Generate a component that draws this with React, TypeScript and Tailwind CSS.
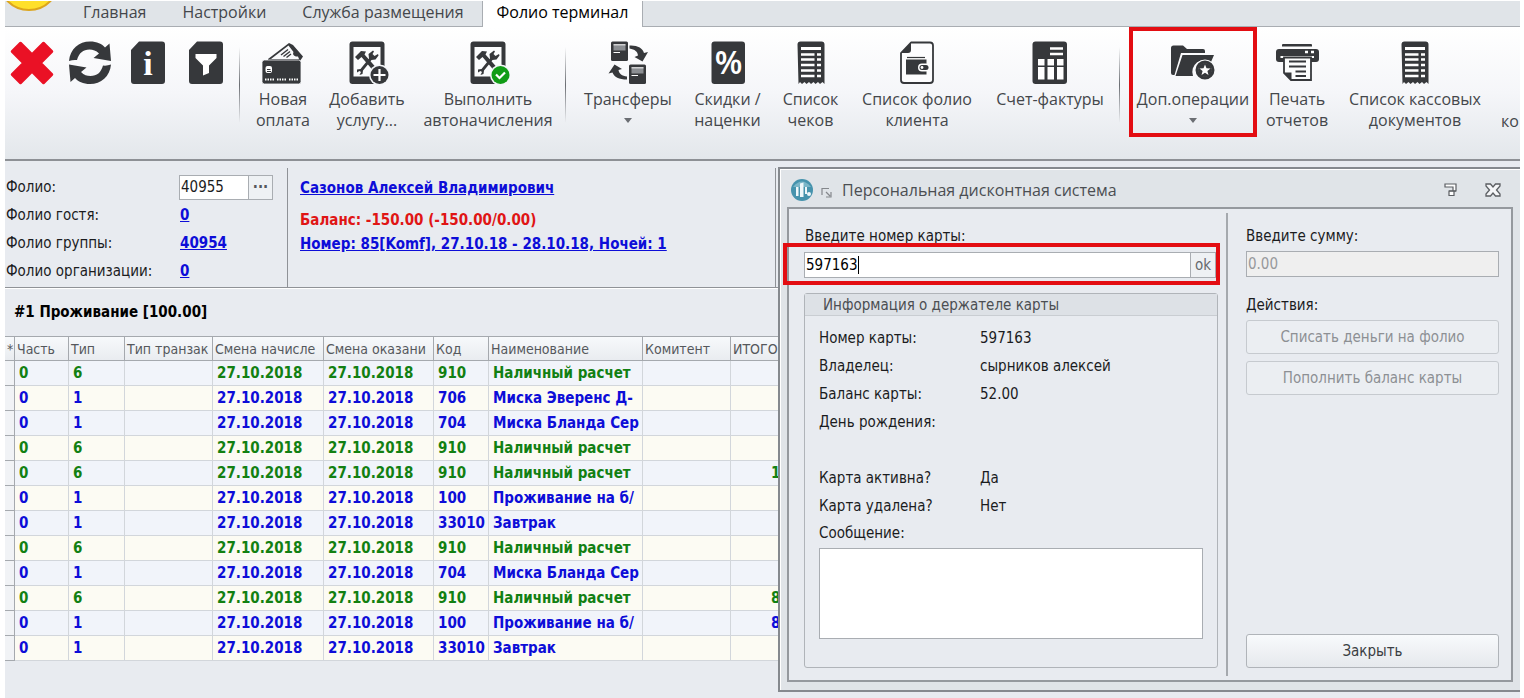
import { useState } from "react";
import type { ReactNode } from "react";

const DARK = "#36383b";

/* ICONS */
function Icon({ children }: { children: ReactNode }) {
  return (
    <svg viewBox="0 0 44 44" className="block size-11 shrink-0" aria-hidden="true">
      {children}
    </svg>
  );
}

function CloseIcon() {
  return (
    <Icon>
      <path
        d="M2 10.5 10.5 2 22 13.5 33.500 2 42 10.500 30.500 22 42 33.500 33.500 42 22 30.500 10.500 42 2 33.500 13.500 22Z"
        fill="#ea1125"
        stroke="#ea1125"
        strokeWidth="2.500"
        strokeLinejoin="round"
      />
    </Icon>
  );
}

function RefreshIcon() {
  const arrow =
    "M1 20C2 8 11 .5 22 .5C29 .5 34 3 37 6.500L41.500 2.500L43 20L25.500 17L31 12.500C28 9.500 25 8.500 21.500 8.500C15 8.500 11 12 9 19Q5 18.500 1 20Z";
  return (
    <Icon>
      <path d={arrow} fill={DARK} />
      <path d={arrow} fill={DARK} transform="rotate(180 22 21.750)" />
    </Icon>
  );
}

function InfoIcon() {
  return (
    <Icon>
      <path d="M13 .5H36a3 3 0 0 1 3 3V40a3 3 0 0 1-3 3H8a3 3 0 0 1-3-3V9Z" fill={DARK} />
      <text x="22" y="34" textAnchor="middle" fontSize="34" fontWeight="700" fill="#fff" fontFamily="Liberation Serif, serif">
        i
      </text>
    </Icon>
  );
}

function FilterIcon() {
  return (
    <Icon>
      <path d="M13 .5H36a3 3 0 0 1 3 3V40a3 3 0 0 1-3 3H8a3 3 0 0 1-3-3V9Z" fill={DARK} />
      <path d="M11.500 13h21v4L25 24.500V32l-6 2.500v-10L11.500 17Z" fill="#fff" />
    </Icon>
  );
}

function PaymentIcon() {
  return (
    <Icon>
      <path d="M7 18 28 2 32 4 42 15.500 39 20V24H7Z" fill={DARK} />
      <path d="M10 18 27.500 4.500 32.500 11C31 14 34 16 37 15.500L38 18Z" fill="#f8f9fb" />
      <path d="M20 14 27 8.500M22.500 15.500 29 10.500M25.500 16.500 30 13" stroke={DARK} strokeWidth="1.400" />
      <rect x="1" y="19" width="39" height="24" rx="2.500" fill={DARK} stroke="#f8f9fb" strokeWidth=".8" />
      <rect x="4.500" y="25" width="6.500" height="7" rx="2" fill="#fff" />
      <path d="M6 28.500h3.500M6 30.500h4" stroke={DARK} strokeWidth="1" />
      <path d="M4 38.500h9M16 38.500h9M28 38.500h9" stroke="#fff" strokeWidth="2" strokeDasharray="1.500 1" />
    </Icon>
  );
}

function TabletIcon({ done = false }: { done?: boolean }) {
  return (
    <Icon>
      <rect x="4.500" y=".5" width="35" height="42.500" rx="3" fill={DARK} />
      <rect x="8.500" y="6" width="27" height="29.500" fill="#fbfcfd" />
      {/* hammer */}
      <path d="M10 16 16 10 21 10.500 19.500 13.500 31 26.500 28 29.500 16.500 16 13 19Z" fill={DARK} />
      {/* wrench */}
      <path
        d="M12 28.500 15.500 28 24 17.500 23.500 13 28 9.500 29 10.500 27.500 13 29.500 15 33 13 33.500 14.500 30.500 18.500 26.500 19 18 29.500 17.500 33 14.500 34 16 31 14.500 30 12 31.500Z"
        fill={DARK}
      />
      <circle cx="34.500" cy="34" r="10.500" fill="#f4f6f9" />
      <circle cx="34.500" cy="34" r="9" fill={done ? "#119c16" : DARK} />
      {done ? (
        <path d="M30 33.500 33.500 37 39 31.500" fill="none" stroke="#fff" strokeWidth="2.200" />
      ) : (
        <path d="M28.500 34h12M34.500 28v12" stroke="#fff" strokeWidth="2.200" />
      )}
    </Icon>
  );
}

function TransferIcon() {
  return (
    <Icon>
      <rect x="5" y=".5" width="17" height="19.500" rx="1.500" fill={DARK} />
      <rect x="7.500" y="3.500" width="12" height="6" fill="#8b8e92" />
      <path d="M7.500 3.800h12M7.500 11.500h6.500" stroke="#fff" strokeWidth="1" />
      <rect x="23" y="23.500" width="17" height="19.500" rx="1.500" fill={DARK} />
      <rect x="25.500" y="26.500" width="12" height="6" fill="#8b8e92" />
      <path d="M25.500 26.800h12M25.500 34.500h6.500" stroke="#fff" strokeWidth="1" />
      <path d="M23.500 4.500C31 4 37 7 38 12L42 11 36.500 20.500 28.500 16 32 14.500C31.500 10.500 29 8.500 23.500 7.500Z" fill={DARK} />
      <path d="M21 38.500C13 38.500 8 36 6.500 31.500L2.500 32.500 8.500 23.500 16 28 12.500 29C13 32.500 16 35 21 35.500Z" fill={DARK} />
    </Icon>
  );
}

function PercentIcon() {
  return (
    <Icon>
      <rect x="5.500" y=".5" width="33.500" height="42.500" rx="3" fill={DARK} />
      <text x="22.500" y="33" textAnchor="middle" fontSize="32" fontWeight="600" fill="#fff" fontFamily="Open Sans, sans-serif">
        %
      </text>
    </Icon>
  );
}

function ReceiptIcon() {
  return (
    <Icon>
      <path
        d="M8.500 3.500a3 3 0 0 1 3-3h21a3 3 0 0 1 3 3V43l-2-2-2.500 2-2-2-2.500 2-2-2-2.500 2-2-2-2.500 2-2-2-2.500 2-2-2-1.500 2Z"
        fill={DARK}
      />
      <path d="M12 7.500H32" stroke="#fff" strokeWidth="3" />
      {[13.500, 18.500, 24, 29.500, 35].map((y) => (
        <path key={y} d={`M12 ${y}H25.500M28 ${y}H32`} stroke="#fff" strokeWidth="2.500" />
      ))}
    </Icon>
  );
}

function FolioIcon() {
  return (
    <Icon>
      <path
        d="M16 1.500H35a3 3 0 0 1 3 3V39a3 3 0 0 1-3 3H9a3 3 0 0 1-3-3V12Z"
        fill="#fdfdfe"
        stroke={DARK}
        strokeWidth="1.800"
        strokeLinejoin="round"
      />
      <path d="M16 1.500V9a3 3 0 0 1-3 3H6Z" fill={DARK} />
      <path d="M12 16.500H30" stroke={DARK} strokeWidth="1.200" />
      <path d="M11 18.500H31.500V33.500H11Z" fill={DARK} />
      <rect x="23" y="22.500" width="12" height="8" rx="4" fill="#fff" />
      <rect x="24.500" y="24" width="9" height="5" rx="2.500" fill={DARK} />
      <circle cx="27" cy="26.500" r="1.400" fill="#fff" />
    </Icon>
  );
}

function InvoiceIcon() {
  return (
    <Icon>
      <rect x="4.500" y=".5" width="34.500" height="42.500" rx="3" fill={DARK} />
      <path d="M22 7.500H35M22 13H35" stroke="#fff" strokeWidth="2.500" />
      {[10, 19.500, 29].map((x) => (
        <g key={x} fill="#fff">
          <rect x={x} y="18" width="6.500" height="6.500" />
          <rect x={x} y="26" width="6.500" height="12.500" />
        </g>
      ))}
    </Icon>
  );
}

function FolderIcon() {
  return (
    <Icon>
      <path d="M0 7a2.500 2.500 0 0 1 2.500-2.500H12L16 8H32a2 2 0 0 1 2 2v2H10L3.500 34H2a2 2 0 0 1-2-2Z" fill={DARK} />
      <path d="M11.500 14H43L40 21A12 12 0 0 0 22 35H4.500Z" fill={DARK} />
      <circle cx="34" cy="29" r="10.500" fill="#f9fafb" />
      <circle cx="34" cy="29" r="8" fill="none" stroke={DARK} strokeWidth="3" />
      <circle cx="34" cy="29" r="7" fill={DARK} />
      <path d="M34 23.500 35.500 27.300 39.500 27.500 36.400 30.100 37.500 34 34 31.800 30.500 34 31.600 30.100 28.500 27.500 32.500 27.300Z" fill="#fff" />
    </Icon>
  );
}

function PrinterIcon() {
  return (
    <Icon>
      <path d="M7 5.500V4a1 1 0 0 1 1-1H36a1 1 0 0 1 1 1V5.500Z" fill={DARK} />
      <path d="M1 11a3 3 0 0 1 3-3H41a3 3 0 0 1 3 3V18a3 3 0 0 1-3 3H4a3 3 0 0 1-3-3Z" fill={DARK} />
      <path d="M30 11h3M36 11h3" stroke="#fff" strokeWidth="2.500" />
      <path d="M5.500 16H39" stroke="#fff" strokeWidth="2" />
      <path d="M9 16.500H36V39H16L9 32Z" fill="#fcfdfd" stroke={DARK} strokeWidth="1.800" />
      <path d="M9 31.500H16.500V39.500Z" fill={DARK} />
      <path d="M14 20.500H31M14 25.500H31M20.500 30.500H31M20.500 35H31" stroke={DARK} strokeWidth="1.900" />
    </Icon>
  );
}

/* DATA */
const tabs = ["Главная", "Настройки", "Служба размещения", "Фолио терминал"];

type Tool = { lines: string[]; icon: ReactNode; width: string; menu?: boolean; marked?: boolean };

const toolGroups: Tool[][] = [
  [
    { lines: ["Новая", "оплата"], icon: <PaymentIcon />, width: "w-[74px]" },
    { lines: ["Добавить", "услугу..."], icon: <TabletIcon />, width: "w-[94px]" },
    { lines: ["Выполнить", "автоначисления"], icon: <TabletIcon done />, width: "w-[148px]" },
  ],
  [
    { lines: ["Трансферы"], icon: <TransferIcon />, width: "w-[112px]", menu: true },
    { lines: ["Скидки /", "наценки"], icon: <PercentIcon />, width: "w-[87px]" },
    { lines: ["Список", "чеков"], icon: <ReceiptIcon />, width: "w-[79px]" },
    { lines: ["Список фолио", "клиента"], icon: <FolioIcon />, width: "w-[134px]" },
    { lines: ["Счет-фактуры"], icon: <InvoiceIcon />, width: "w-[132px]" },
  ],
  [
    { lines: ["Доп.операции"], icon: <FolderIcon />, width: "w-[128px]", menu: true, marked: true },
    { lines: ["Печать", "отчетов"], icon: <PrinterIcon />, width: "w-[80px]" },
    { lines: ["Список кассовых", "документов"], icon: <ReceiptIcon />, width: "w-[156px]" },
  ],
];

const columns = [
  { title: "*", width: "w-[10px]" },
  { title: "Часть", width: "w-[54px]" },
  { title: "Тип", width: "w-[56px]" },
  { title: "Тип транзак", width: "w-[88px]" },
  { title: "Смена начисле", width: "w-[111px]" },
  { title: "Смена оказани", width: "w-[110px]" },
  { title: "Код", width: "w-[55px]" },
  { title: "Наименование", width: "w-[154px]" },
  { title: "Комитент", width: "w-[88px]" },
  { title: "ИТОГО", width: "w-[120px]" },
];

const rows = [
  { type: 6, code: "910", name: "Наличный расчет", total: "" },
  { type: 1, code: "706", name: "Миска Эверенс Д-", total: "" },
  { type: 1, code: "704", name: "Миска Бланда Сер", total: "" },
  { type: 6, code: "910", name: "Наличный расчет", total: "" },
  { type: 6, code: "910", name: "Наличный расчет", total: "1" },
  { type: 1, code: "100", name: "Проживание на б/", total: "" },
  { type: 1, code: "33010", name: "Завтрак", total: "" },
  { type: 6, code: "910", name: "Наличный расчет", total: "" },
  { type: 1, code: "704", name: "Миска Бланда Сер", total: "" },
  { type: 6, code: "910", name: "Наличный расчет", total: "8" },
  { type: 1, code: "100", name: "Проживание на б/", total: "8" },
  { type: 1, code: "33010", name: "Завтрак", total: "" },
];

const cardInfo = [
  ["Номер карты:", "597163"],
  ["Владелец:", "сырников алексей"],
  ["Баланс карты:", "52.00"],
  ["День рождения:", ""],
  ["", ""],
  ["Карта активна?", "Да"],
  ["Карта удалена?", "Нет"],
];

function Divider() {
  return (
    <div className="mt-5 mr-[6px] ml-[3px] h-[76px] w-px shrink-0 bg-linear-to-b from-transparent via-[#6a6d72] to-transparent" />
  );
}

function ToolButton({ tool }: { tool: Tool }) {
  return (
    <button
      className={`flex h-[110px] shrink-0 flex-col items-center whitespace-nowrap text-[16px] leading-[21px] ${tool.width} ${
        tool.marked ? "ml-[3px] border-4 border-[#e30d12] pt-[10px]" : "pt-[14px]"
      }`}
    >
      {tool.icon}
      <span className="mt-1">{tool.lines[0]}</span>
      {tool.lines[1] && <span>{tool.lines[1]}</span>}
      {tool.menu && (
        <svg viewBox="0 0 8 5" className="mt-2 h-[5px] w-2" aria-hidden="true">
          <path d="M0 0H8L4 5Z" fill="#6b6e73" />
        </svg>
      )}
    </button>
  );
}

function Ribbon() {
  return (
    <header className="text-[#44474b] [font-family:'Open_Sans','Noto_Sans',sans-serif]">
      {/* TABS */}
      <nav className="relative flex h-[26px] overflow-hidden bg-[#e0e4e8] pl-[60px] text-[16px] leading-[22px] shadow-[inset_0_-1px_0_#a9adb2]">
        <div className="absolute bottom-4 -left-[7px] size-[62px] rounded-full border-2 border-[#dca51c] bg-[#ffe02b]" />
        {tabs.map((tab) => (
          <button
            key={tab}
            className={
              tab === "Фолио терминал"
                ? "border-x border-[#a9adb2] bg-white px-[14px] pb-1 text-black"
                : "px-[18px] pb-1"
            }
          >
            {tab}
          </button>
        ))}
      </nav>

      {/* TOOLS */}
      <div className="flex h-[134px] items-start overflow-hidden border-b-2 border-[#8d9095] bg-linear-to-b from-white via-[#f5f6f9] to-[#e3e7eb] pl-[5px]">
        <div className="mr-2 flex shrink-0 gap-[14px] pt-[14px]">
          {[
            { label: "Закрыть", icon: <CloseIcon /> },
            { label: "Обновить", icon: <RefreshIcon /> },
            { label: "Информация", icon: <InfoIcon /> },
            { label: "Фильтр", icon: <FilterIcon /> },
          ].map((item) => (
            <button key={item.label} aria-label={item.label}>
              {item.icon}
            </button>
          ))}
        </div>
        {toolGroups.map((group, i) => (
          <div key={i} className="flex shrink-0">
            <Divider />
            {group.map((tool) => (
              <ToolButton key={tool.lines.join(" ")} tool={tool} />
            ))}
          </div>
        ))}
        <button className="pt-[84px] pl-2 text-[16px] leading-[21px]">ко</button>
      </div>
    </header>
  );
}

function FolioInfo() {
  const [folio, setFolio] = useState("40955");
  const link = "font-bold text-[#0d0dd8] underline";

  return (
    <section className="flex h-[127px] border-b border-[#8f9297] pt-[7px] shadow-[0_1px_0_#fff]">
      <div className="grid w-[283px] grid-cols-[174px_1fr] auto-rows-[28px] items-center border-r border-[#8f9297] pt-[5px] pl-px">
        <label htmlFor="folio">Фолио:</label>
        <div className="-ml-px flex h-[25px] w-[94px] border border-[#a9adb2] bg-white">
          <input
            id="folio"
            value={folio}
            onChange={(e) => setFolio(e.target.value)}
            className="w-[68px] px-px outline-none"
          />
          <button className="flex flex-1 items-center justify-center border-l border-[#a9adb2] bg-[#eef1f4] font-bold leading-none text-[#55585c]">
            ···
          </button>
        </div>
        <span>Фолио гостя:</span>
        <a href="#guest" className={link}>0</a>
        <span>Фолио группы:</span>
        <a href="#group" className={link}>40954</a>
        <span>Фолио организации:</span>
        <a href="#company" className={link}>0</a>
      </div>
      <div className="flex w-[488px] flex-col items-start border-r border-[#8f9297] pt-[10px] pl-3 font-bold leading-5">
        <a href="#person" className={link}>Сазонов Алексей Владимирович</a>
        <p className="mt-3 text-[#e01515]">Баланс: -150.00 (-150.00/0.00)</p>
        <a href="#room" className={`mt-1 ${link}`}>Номер: 85[Komf], 27.10.18 - 28.10.18, Ночей: 1</a>
      </div>
    </section>
  );
}

function FolioTable() {
  const cell = "overflow-hidden border-r border-b border-[#d2d6db] px-1 whitespace-nowrap";

  return (
    <section>
      <h2 className="flex h-12 items-center pl-[9px] font-bold text-black">#1 Проживание [100.00]</h2>
      <table className="w-[846px] table-fixed border-separate border-spacing-0">
        <thead>
          <tr className="h-[25px] text-left text-[14px] text-[#55585c]">
            {columns.map((col) => (
              <th
                key={col.title}
                className={`overflow-hidden border-t border-r border-b border-[#a5a9ae] bg-linear-to-b from-[#f7f9fb] to-[#e9ecf0] pl-[2px] font-normal whitespace-nowrap ${col.width}`}
              >
                {col.title}
              </th>
            ))}
          </tr>
        </thead>
        <tbody>
          {rows.map((row, i) => (
            <tr
              key={i}
              className={`h-[25px] font-bold ${i % 2 ? "bg-[#fcfbf3]" : "bg-[#f1f4fa]"} ${
                row.type === 6 ? "text-[#128012]" : "text-[#0d0dd8]"
              }`}
            >
              <td className="border-r border-b border-[#a5a9ae] bg-[#f1f3f6]" />
              <td className={cell}>0</td>
              <td className={cell}>{row.type}</td>
              <td className={cell} />
              <td className={cell}>27.10.2018</td>
              <td className={cell}>27.10.2018</td>
              <td className={cell}>{row.code}</td>
              <td className={cell}>{row.name}</td>
              <td className={cell} />
              <td className={`${cell} pl-10`}>{row.total}</td>
            </tr>
          ))}
        </tbody>
      </table>
    </section>
  );
}

function CardDialog() {
  const [card, setCard] = useState("597163");
  const [message, setMessage] = useState("");
  const action = "h-[34px] w-full rounded-[3px] border";

  return (
    <div
      role="dialog"
      aria-labelledby="dialog-title"
      className="absolute top-[6px] -right-px flex h-[525px] w-[743px] flex-col border-2 border-r-0 border-[#85898e] bg-[#e0e4e8] pr-2 pb-2 pl-[7px] shadow-[inset_1px_1px_0_#fff]"
    >
      {/* TITLE */}
      <div className="flex h-[38px] items-center pt-1 pl-1 text-[#4b4e52] [font-family:'Open_Sans','Noto_Sans',sans-serif]">
        <svg viewBox="0 0 22 22" className="size-[22px]" aria-hidden="true">
          <circle cx="11" cy="11" r="11" fill="#4693ad" />
          <path d="M2 8Q11 -3 20 8" fill="#7bb6c8" />
          <path d="M5 8h2.500v9H5ZM9 4.500l3.500-1V18H9ZM14 8h2v7h-2Z" fill="#eef7fa" />
          <circle cx="18" cy="15" r="2" fill="#eef7fa" />
        </svg>
        <svg viewBox="0 0 11 11" className="mt-1 ml-2 size-[11px]" aria-hidden="true">
          <path d="M1 8V1.500H8M10 5v5H5M5 5l4 4" fill="none" stroke="#84878b" strokeWidth="1.200" />
        </svg>
        <h2 id="dialog-title" className="ml-[10px] text-[16px]">Персональная дисконтная система</h2>
        <button aria-label="Свернуть" className="ml-auto">
          <svg viewBox="0 0 14 14" className="size-[14px]" aria-hidden="true">
            <path d="M1 1H12V8H10V12.500H5V8H9V4H1Z" fill="#fff" stroke="#5b5e62" strokeWidth="1.200" />
            <path d="M5 8H12" stroke="#5b5e62" strokeWidth="1.200" />
          </svg>
        </button>
        <button aria-label="Закрыть окно" className="mr-3 ml-[27px]">
          <svg viewBox="0 0 16 14" className="h-[14px] w-4" aria-hidden="true">
            <path
              d="M1 1H5.500L8 4 10.500 1H15V3L11.500 7 15 11V13H10.500L8 10 5.500 13H1V11L4.500 7 1 3Z"
              fill="#f5f6f8"
              stroke="#5b5e62"
              strokeWidth="1.300"
            />
          </svg>
        </button>
      </div>

      <div className="flex flex-1 border-2 border-[#95999e] bg-[#e8ebf0]">
        {/* CARD */}
        <div className="flex flex-1 flex-col pt-[17px] pr-2 pb-3 pl-[15px]">
          <label htmlFor="card" className="pl-px leading-5">Введите номер карты:</label>
          <div className="relative mt-[6px] mr-[2px] flex h-[26px] border border-[#a9adb2] bg-white">
            <input
              id="card"
              value={card}
              onChange={(e) => setCard(e.target.value)}
              className="min-w-0 flex-1 px-px text-black outline-none"
            />
            <span className="absolute top-[3px] left-[53px] h-[18px] w-px bg-black" />
            <button className="w-[25px] border-l border-[#a9adb2] bg-[#eef1f4] text-[#66696d]">ok</button>
            <div className="pointer-events-none absolute -top-[10px] -right-[5px] -bottom-[8px] -left-[22px] border-4 border-[#e30d12]" />
          </div>

          <fieldset className="mt-[15px] flex flex-1 flex-col rounded-[3px] border border-[#b0b4b9]">
            <p className="h-[22px] border-b border-[#c9cdd2] bg-[#dde1e6] pl-[18px] leading-[22px] text-[#4b4e52]">
              Информация о держателе карты
            </p>
            <dl className="mt-2 grid auto-rows-[28px] grid-cols-[161px_1fr] items-center pl-[14px]">
              {cardInfo.map(([name, value], i) => (
                <div key={i} className="contents">
                  <dt>{name}</dt>
                  <dd>{value}</dd>
                </div>
              ))}
            </dl>
            <label htmlFor="message" className="pl-[14px] leading-[26px]">Сообщение:</label>
            <textarea
              id="message"
              value={message}
              onChange={(e) => setMessage(e.target.value)}
              className="mx-[14px] mt-[2px] h-[91px] resize-none border border-[#a9adb2] bg-white p-1 outline-none"
            />
          </fieldset>
        </div>

        {/* ACTIONS */}
        <div className="my-1 flex w-[285px] flex-col border-l-2 border-[#a5a9ae] pt-[13px] pr-3 pb-2 pl-[18px]">
          <label htmlFor="sum" className="leading-5">Введите сумму:</label>
          <input
            id="sum"
            disabled
            value="0.00"
            className="mt-[5px] h-[26px] border border-[#a9adb2] bg-[#efefef] px-px text-[#97999c]"
          />
          <p className="mt-[18px] leading-5">Действия:</p>
          <button disabled className={`${action} mt-[5px] border-[#c6cacf] bg-[#ebeef2] text-[#8d9094]`}>
            Списать деньги на фолио
          </button>
          <button disabled className={`${action} mt-[7px] border-[#c6cacf] bg-[#ebeef2] text-[#8d9094]`}>
            Пополнить баланс карты
          </button>
          <button className={`${action} mt-auto border-[#b0b4b9] bg-linear-to-b from-[#f8fafc] to-[#e6e9ed] text-[#3b3e42]`}>
            Закрыть
          </button>
        </div>
      </div>
    </div>
  );
}

export default function App() {
  return (
    <div className="min-h-screen bg-white pt-px pr-1 pl-[5px]">
      <div className="flex min-h-[calc(100vh-1px)] flex-col overflow-hidden bg-[#e8ebf0]">
        <Ribbon />
        <main className="relative flex-1 overflow-hidden text-[15px] leading-5 text-[#1b1c1e] [font-family:'DejaVu_Sans_Condensed','DejaVu_Sans',sans-serif]">
          <FolioInfo />
          <FolioTable />
          <CardDialog />
        </main>
      </div>
    </div>
  );
}
